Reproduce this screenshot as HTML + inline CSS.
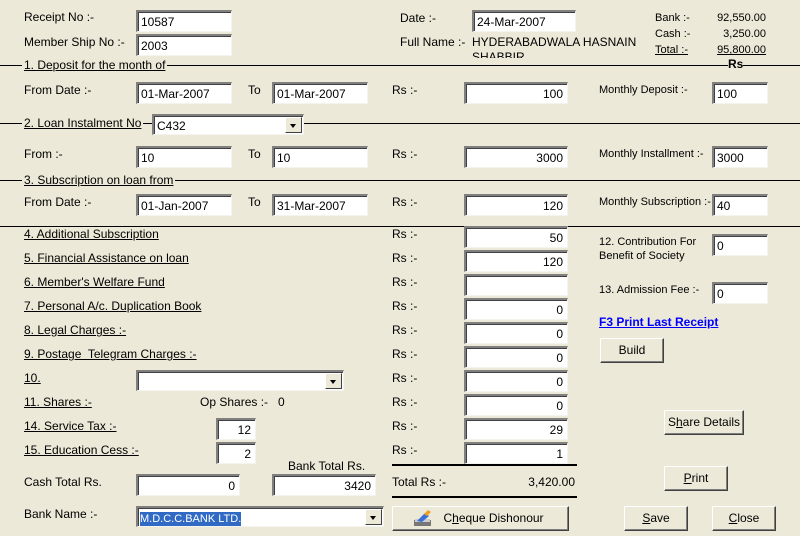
<!DOCTYPE html>
<html><head><style>
body{margin:0;width:800px;height:536px;background:#ECE9D8;position:relative;overflow:hidden;font-family:"Liberation Sans",sans-serif;font-size:12px;color:#000}
.l{position:absolute;white-space:nowrap;line-height:14px}
.u{text-decoration:underline}
.b{position:absolute;background:#fff;box-sizing:border-box;border-top:2px solid #808080;border-left:2px solid #808080;border-right:1px solid #f4f3ee;border-bottom:1px solid #f4f3ee;box-shadow:inset 1px 1px 0 #404040;height:22px;line-height:19px;padding:1px 4px 0 3px;white-space:nowrap;overflow:hidden}
.r{text-align:right}
.hl{position:absolute;height:1px;background:#000;left:0;width:800px}
.bt{position:absolute;box-sizing:border-box;background:#ECE9D8;border:1px solid;border-color:#fff #404040 #404040 #fff;box-shadow:inset -1px -1px 0 #808080;text-align:center;line-height:22px;height:25px}
.dd{position:absolute;right:1px;top:1px;width:17px;height:16px;background:#ECE9D8;box-sizing:border-box;border:1px solid;border-color:#fff #404040 #404040 #fff}
.dd:after{content:"";position:absolute;left:4px;top:6px;border-left:3.5px solid transparent;border-right:3.5px solid transparent;border-top:4px solid #000}
</style></head><body>
<div class="l" style="left:24px;top:10px">Receipt No :-</div>
<div class="b" style="left:136px;top:10px;width:96px">10587</div>
<div class="l" style="left:24px;top:35px">Member Ship No :-</div>
<div class="b" style="left:136px;top:34px;width:96px">2003</div>
<div class="l" style="left:400px;top:11px">Date :-</div>
<div class="b" style="left:472px;top:10px;width:104px">24-Mar-2007</div>
<div class="l" style="left:400px;top:35px">Full Name :-&nbsp; HYDERABADWALA HASNAIN</div>
<div class="l" style="left:472px;top:50px;height:8px;overflow:hidden">SHABBIR</div>
<div class="l" style="left:655px;top:11px;font-size:11px">Bank :-</div>
<div class="l" style="left:655px;top:27px;font-size:11px">Cash :-</div>
<div class="l u" style="left:655px;top:43px;font-size:11px">Total :-</div>
<div class="l" style="right:34px;top:11px;font-size:11px">92,550.00</div>
<div class="l" style="right:34px;top:27px;font-size:11px">3,250.00</div>
<div class="l u" style="right:34px;top:43px;font-size:11px">95,800.00</div>

<div class="hl" style="top:65px"></div>
<div class="l u" style="left:22px;top:58px;background:#ECE9D8;padding:0 2px">1. Deposit for the month of</div>
<div class="l" style="left:728px;top:57px;font-weight:bold;background:#ECE9D8">Rs</div>
<div class="l" style="left:24px;top:83px">From Date :-</div>
<div class="b" style="left:136px;top:82px;width:96px">01-Mar-2007</div>
<div class="l" style="left:248px;top:83px">To</div>
<div class="b" style="left:272px;top:82px;width:96px">01-Mar-2007</div>
<div class="l" style="left:392px;top:83px">Rs :-</div>
<div class="b r" style="left:464px;top:82px;width:104px">100</div>
<div class="l" style="left:599px;top:83px;font-size:11px">Monthly Deposit :-</div>
<div class="b" style="left:712px;top:82px;width:56px">100</div>

<div class="hl" style="top:123px"></div>
<div class="l u" style="left:22px;top:116px;background:#ECE9D8;padding:0 2px">2. Loan Instalment No</div>
<div class="b" style="left:152px;top:114px;width:152px;height:21px">C432<div class="dd"></div></div>
<div class="l" style="left:24px;top:147px">From :-</div>
<div class="b" style="left:136px;top:146px;width:96px">10</div>
<div class="l" style="left:248px;top:147px">To</div>
<div class="b" style="left:272px;top:146px;width:96px">10</div>
<div class="l" style="left:392px;top:147px">Rs :-</div>
<div class="b r" style="left:464px;top:146px;width:104px">3000</div>
<div class="l" style="left:599px;top:147px;font-size:11px">Monthly Installment :-</div>
<div class="b" style="left:712px;top:146px;width:56px">3000</div>

<div class="hl" style="top:180px"></div>
<div class="l u" style="left:22px;top:173px;background:#ECE9D8;padding:0 2px">3. Subscription on loan from</div>
<div class="l" style="left:24px;top:195px">From Date :-</div>
<div class="b" style="left:136px;top:194px;width:96px">01-Jan-2007</div>
<div class="l" style="left:248px;top:195px">To</div>
<div class="b" style="left:272px;top:194px;width:96px">31-Mar-2007</div>
<div class="l" style="left:392px;top:195px">Rs :-</div>
<div class="b r" style="left:464px;top:194px;width:104px">120</div>
<div class="l" style="left:599px;top:195px;font-size:11px">Monthly Subscription :-</div>
<div class="b" style="left:712px;top:194px;width:56px">40</div>

<div class="hl" style="top:226px"></div>
<div class="l u" style="left:24px;top:227px">4. Additional Subscription</div>
<div class="l u" style="left:24px;top:251px">5. Financial Assistance on loan</div>
<div class="l u" style="left:24px;top:275px">6. Member's Welfare Fund</div>
<div class="l u" style="left:24px;top:299px">7. Personal A/c. Duplication Book</div>
<div class="l u" style="left:24px;top:323px">8. Legal Charges :-</div>
<div class="l u" style="left:24px;top:347px">9. Postage&nbsp; Telegram Charges :-</div>
<div class="l u" style="left:24px;top:371px">10.</div>
<div class="l u" style="left:24px;top:395px">11. Shares :-</div>
<div class="l u" style="left:24px;top:419px">14. Service Tax :-</div>
<div class="l u" style="left:24px;top:443px">15. Education Cess :-</div>
<div class="b" style="left:136px;top:370px;width:208px;height:21px"><div class="dd"></div></div>
<div class="l" style="left:200px;top:395px">Op Shares :-&nbsp;&nbsp; 0</div>
<div class="b r" style="left:216px;top:418px;width:40px">12</div>
<div class="b r" style="left:216px;top:442px;width:40px">2</div>

<div class="l" style="left:392px;top:227px">Rs :-</div><div class="b r" style="left:464px;top:226px;width:104px">50</div>
<div class="l" style="left:392px;top:251px">Rs :-</div><div class="b r" style="left:464px;top:250px;width:104px">120</div>
<div class="l" style="left:392px;top:275px">Rs :-</div><div class="b r" style="left:464px;top:274px;width:104px"></div>
<div class="l" style="left:392px;top:299px">Rs :-</div><div class="b r" style="left:464px;top:298px;width:104px">0</div>
<div class="l" style="left:392px;top:323px">Rs :-</div><div class="b r" style="left:464px;top:322px;width:104px">0</div>
<div class="l" style="left:392px;top:347px">Rs :-</div><div class="b r" style="left:464px;top:346px;width:104px">0</div>
<div class="l" style="left:392px;top:371px">Rs :-</div><div class="b r" style="left:464px;top:370px;width:104px">0</div>
<div class="l" style="left:392px;top:395px">Rs :-</div><div class="b r" style="left:464px;top:394px;width:104px">0</div>
<div class="l" style="left:392px;top:419px">Rs :-</div><div class="b r" style="left:464px;top:418px;width:104px">29</div>
<div class="l" style="left:392px;top:443px">Rs :-</div><div class="b r" style="left:464px;top:442px;width:104px">1</div>

<div class="l" style="left:599px;top:235px;font-size:11px;line-height:14px">12. Contribution For<br>Benefit of Society</div>
<div class="b" style="left:712px;top:234px;width:56px">0</div>
<div class="l" style="left:599px;top:283px;font-size:11px">13. Admission Fee :-</div>
<div class="b" style="left:712px;top:282px;width:56px">0</div>
<div class="l u" style="left:599px;top:315px;color:#0000FF;font-weight:bold">F3 Print Last Receipt</div>
<div class="bt" style="left:600px;top:338px;width:64px">Build</div>
<div class="bt" style="left:664px;top:410px;width:80px;font-size:12px">S<span class="u">h</span>are Details</div>
<div class="bt" style="left:664px;top:466px;width:64px"><span class="u">P</span>rint</div>

<div style="position:absolute;left:392px;top:464px;width:185px;height:2px;background:#000"></div>
<div class="l" style="left:392px;top:475px">Total Rs :-</div>
<div class="l" style="right:225px;top:475px">3,420.00</div>
<div style="position:absolute;left:392px;top:496px;width:185px;height:2px;background:#000"></div>

<div class="l" style="left:288px;top:459px">Bank Total Rs.</div>
<div class="l" style="left:24px;top:475px">Cash Total Rs.</div>
<div class="b r" style="left:136px;top:474px;width:104px">0</div>
<div class="b r" style="left:272px;top:474px;width:104px">3420</div>
<div class="l" style="left:24px;top:507px">Bank Name :-</div>
<div class="b" style="left:136px;top:506px;width:248px;height:21px;padding-left:2px"><span style="background:#316AC5;color:#fff;font-size:11px;line-height:14px;display:inline-block">M.D.C.C.BANK LTD.</span><div class="dd"></div></div>

<div class="bt" style="left:392px;top:506px;width:177px;font-size:12px"><svg style="position:absolute;left:20px;top:2px" width="22" height="20"><rect x="1" y="11" width="17" height="6" fill="#777"/><rect x="2" y="10" width="15" height="3" fill="#ccc"/><path d="M4 12 L12 4 L16 7 L9 13Z" fill="#3a6fd8"/><path d="M11 5 L15 1 L18 3 L14 7Z" fill="#f0a020"/></svg><span style="margin-left:26px">C<span class="u">h</span>eque Dishonour</span></div>
<div class="bt" style="left:624px;top:506px;width:64px"><span class="u">S</span>ave</div>
<div class="bt" style="left:712px;top:506px;width:64px"><span class="u">C</span>lose</div>
</body></html>
